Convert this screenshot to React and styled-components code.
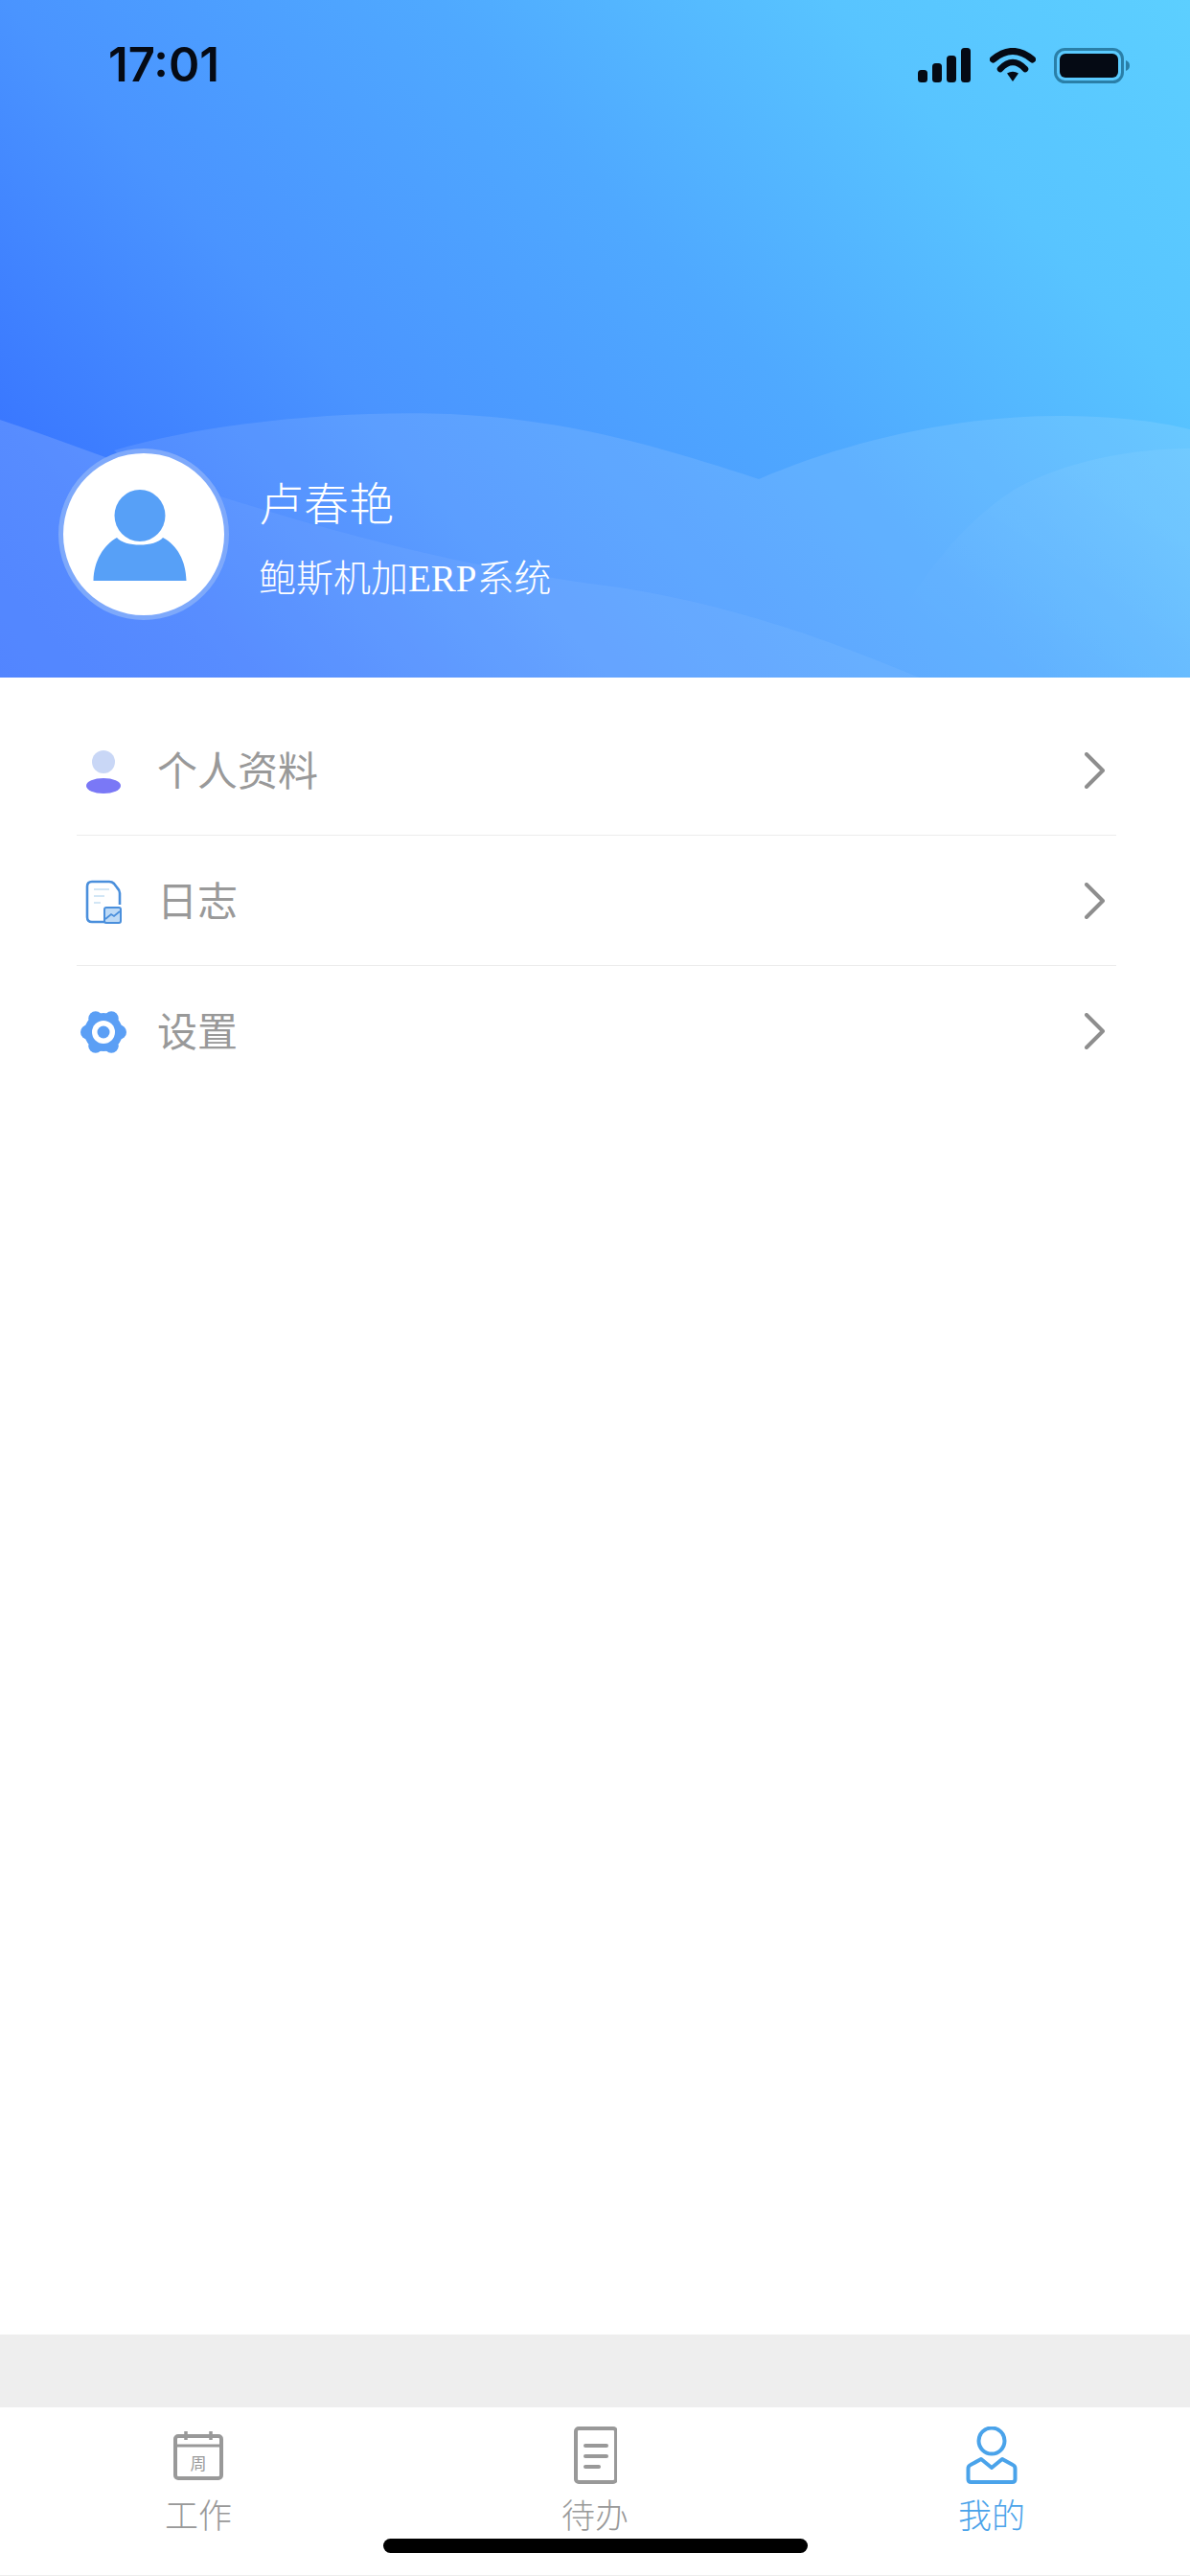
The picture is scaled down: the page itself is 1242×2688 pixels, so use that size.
import React from "react"
import styled, { createGlobalStyle } from "styled-components"

const GlobalStyle = createGlobalStyle`
  html, body {
    margin: 0;
    padding: 0;
    background: #fff;
  }
  * {
    box-sizing: border-box;
  }
`

const Page = styled.div`
  width: 1242px;
  height: 2688px;
  display: flex;
  flex-direction: column;
  position: relative;
  overflow: hidden;
  background: #fff;
  font-family: "Noto Sans CJK SC", "Noto Sans", sans-serif;
`

const Hero = styled.header`
  position: relative;
  height: 707px;
  flex: none;
  display: flex;
  flex-direction: column;
  justify-content: space-between;
  background: linear-gradient(48deg, #3470ff 0%, #3a78ff 13%, #4a94ff 34%, #4fa9ff 58%, #58c4ff 80%, #5ccfff 100%);
  overflow: hidden;
`

const HeroWaves = styled.svg`
  position: absolute;
  inset: 0;
  width: 100%;
  height: 100%;
`

const StatusBar = styled.div`
  position: relative;
  display: flex;
  justify-content: space-between;
  align-items: center;
  height: 36px;
  margin-top: 50px;
  padding: 0 62px 0 113px;
`

const Clock = styled.span`
  font-family: Inter, "Liberation Sans", sans-serif;
  font-size: 49px;
  font-weight: 600;
  line-height: 36px;
  color: #050a14;
`

const StatusIcons = styled.div`
  display: flex;
  align-items: center;
  gap: 19px;
`

const Profile = styled.div`
  position: relative;
  display: flex;
  align-items: center;
  gap: 31px;
  padding: 0 0 60px 61px;
`

const Avatar = styled.div`
  width: 178px;
  height: 179px;
  border-radius: 50%;
  background: #fff;
  border: 5px solid #7ea9fb;
  display: flex;
  align-items: center;
  justify-content: center;
`

const ProfileText = styled.div`
  display: flex;
  flex-direction: column;
  gap: 31px;
  color: #fff;
  margin-top: 7px;
`

const UserName = styled.div`
  font-size: 47px;
  font-weight: 300;
  line-height: 54px;
`

const SystemName = styled.div`
  font-family: "Liberation Serif", "Noto Sans CJK SC", serif;
  font-size: 39px;
  font-weight: 300;
  line-height: 46px;
`

const Menu = styled.nav`
  padding: 29px 77px 0 80px;
  flex: 1;
`

const MenuRow = styled.div`
  display: flex;
  align-items: center;
  height: 136px;
  padding-right: 11px;
  border-bottom: ${p => (p.$last ? "none" : "1px solid #ececec")};
`

const MenuIcon = styled.div`
  width: 56px;
  flex: none;
  display: flex;
  justify-content: center;
  margin-right: 28px;
  padding-top: ${p => p.$drop}px;
`

const MenuLabel = styled.span`
  flex: 1;
  font-size: 42px;
  line-height: 50px;
  margin-bottom: 4px;
  color: #999;
`

const GreyBand = styled.div`
  height: 76px;
  flex: none;
  background: #eee;
`

const TabBar = styled.footer`
  height: 176px;
  flex: none;
  display: grid;
  grid-template-columns: repeat(3, 1fr);
  background: #fff;
  border-bottom: 1px solid #eee;
`

const Tab = styled.div`
  display: flex;
  flex-direction: column;
  align-items: center;
  padding-top: 18px;
  color: ${p => (p.$active ? "#4aa3ea" : "#999")};
`

const TabIcon = styled.div`
  height: 64px;
  display: flex;
  align-items: center;
  justify-content: center;
`

const TabLabel = styled.span`
  margin-top: 8px;
  font-size: 35px;
  font-weight: 300;
  line-height: 42px;
`

const HomeIndicator = styled.div`
  position: absolute;
  left: 400px;
  bottom: 24px;
  width: 443px;
  height: 15px;
  border-radius: 8px;
  background: #000;
`

const SignalIcon = () => (
  <svg width="56" height="36" viewBox="0 0 56 36">
    <rect x="0" y="23" width="10" height="13" rx="3.5" fill="#050a14" />
    <rect x="15" y="16" width="10" height="20" rx="3.5" fill="#050a14" />
    <rect x="30" y="8" width="10" height="28" rx="3.5" fill="#050a14" />
    <rect x="45" y="0" width="10" height="36" rx="3.5" fill="#050a14" />
  </svg>
)

const WifiIcon = () => (
  <svg width="48" height="36" viewBox="0 0 48 36">
    <path d="M3.500 12 Q24 -5 44.500 12" fill="none" stroke="#050a14" strokeWidth="7" strokeLinecap="round" />
    <path d="M11 22 Q24 8 37 22" fill="none" stroke="#050a14" strokeWidth="6.500" strokeLinecap="round" />
    <path d="M18 26.500 Q24 23 30 26.500 L24 35 Z" fill="#050a14" />
  </svg>
)

const BatteryIcon = () => (
  <svg width="80" height="37" viewBox="0 0 80 37">
    <rect x="1.5" y="1.5" width="70" height="34" rx="10" fill="none" stroke="#2a7fa8" strokeWidth="3" />
    <rect x="6" y="6" width="61" height="25" rx="6" fill="#050a14" />
    <path d="M75 13 C78 14 79 16 79 18.5 C79 21 78 23 75 24 Z" fill="#2a7fa8" />
  </svg>
)

const AvatarIcon = () => (
  <svg width="106" height="98" viewBox="0 -2 106 98">
    <ellipse cx="49" cy="27" rx="26.5" ry="27" fill="#57a0f7" />
    <path d="M25 50 C33 60 65 60 73 50 C88 58 97 74 97.500 95 L0.500 95 C1 74 11 58 25 50 Z" fill="#57a0f7" />
  </svg>
)

const ProfileIcon = () => (
  <svg width="38" height="46" viewBox="0 0 38 46">
    <circle cx="19" cy="12" r="12" fill="#c9d7f6" />
    <ellipse cx="19" cy="37" rx="18" ry="8" fill="#7a78f6" />
  </svg>
)

const LogIcon = () => (
  <svg width="38" height="46" viewBox="0 0 38 46">
    <path d="M30 44 L7 44 Q2 44 2 39 L2 7 Q2 2 7 2 L25 2 Q28 2 30 4 L33 8 Q36 11 36 14 L36 26" fill="none" stroke="#4a8fdc" strokeWidth="2.6" />
    <path d="M9 10 H25 M9 17 H20 M9 24 H16" stroke="#d2e6f5" strokeWidth="2" />
    <rect x="20" y="29" width="17" height="16" rx="2" fill="#bedaf6" stroke="#4a8fdc" strokeWidth="2" />
    <path d="M21 41 L27 36 L30 38 L36 33" fill="none" stroke="#4a8fdc" strokeWidth="1.8" />
  </svg>
)

const GearIcon = () => {
  const lobes = [0, 60, 120, 180, 240, 300]
  return (
    <svg width="50" height="48" viewBox="-25 -24 50 48">
      <circle r="20" fill="#5b9ff5" />
      {lobes.map(a => (
        <circle
          key={a}
          cx={16.5 * Math.cos((a * Math.PI) / 180)}
          cy={16.5 * Math.sin((a * Math.PI) / 180)}
          r="7.500"
          fill="#5b9ff5"
        />
      ))}
      <circle r="12" fill="#fff" />
      <circle r="6.500" fill="#5b9ff5" />
    </svg>
  )
}

const Chevron = () => (
  <svg width="22" height="38" viewBox="0 0 22 38">
    <path d="M2 2 L19 19 L2 36" fill="none" stroke="#8e8e8e" strokeWidth="4" strokeLinecap="round" strokeLinejoin="round" />
  </svg>
)

const CalendarIcon = () => (
  <svg width="52" height="52" viewBox="0 0 52 52">
    <rect x="2" y="6" width="48" height="44" rx="3" fill="none" stroke="#999" strokeWidth="4" />
    <path d="M2 16 H50" stroke="#999" strokeWidth="3" />
    <path d="M13 1 V10 M39 1 V10" stroke="#999" strokeWidth="3.500" />
    <text x="26" y="41" textAnchor="middle" fontSize="17" fill="#999" fontFamily="'Noto Sans CJK SC', sans-serif">周</text>
  </svg>
)

const TodoIcon = () => (
  <svg width="46" height="60" viewBox="-1 0 46 60">
    <rect x="2" y="2" width="42" height="56" rx="3" fill="none" stroke="#999" strokeWidth="4" />
    <path d="M12 20 H34 M12 31 H34 M12 42 H26" stroke="#999" strokeWidth="4" strokeLinecap="round" />
  </svg>
)

const MineIcon = () => (
  <svg width="54" height="60" viewBox="0 0 54 60">
    <circle cx="27" cy="15" r="13.500" fill="none" stroke="#4aa3ea" strokeWidth="4" />
    <path d="M2.500 44 Q2.500 41 5 40 L16 34 L27 43 L38 34 L49 40 Q51.500 41 51.500 44 L51.500 55 Q51.500 58 48.500 58 L5.500 58 Q2.500 58 2.500 55 Z" fill="none" stroke="#4aa3ea" strokeWidth="4" strokeLinejoin="round" />
  </svg>
)

const menuItems = [
  { label: "个人资料", icon: <ProfileIcon />, drop: 4 },
  { label: "日志", icon: <LogIcon />, drop: 2 },
  { label: "设置", icon: <GearIcon />, drop: 2 },
]

const tabs = [
  { label: "工作", icon: <CalendarIcon /> },
  { label: "待办", icon: <TodoIcon /> },
  { label: "我的", icon: <MineIcon />, active: true },
]

const App = () => {
  return (
    <Page>
      <GlobalStyle />
      <Hero>
        <HeroWaves viewBox="0 0 1242 707" preserveAspectRatio="none">
          <defs>
            <linearGradient id="lobeFade" x1="0" y1="1" x2="1" y2="0">
              <stop offset="0.2" stopColor="#fff" stopOpacity="0" />
              <stop offset="0.8" stopColor="#fff" stopOpacity="0.06" />
            </linearGradient>
          </defs>
          <path d="M0 438 C60 458 110 478 170 498 C330 552 470 590 640 612 C760 630 860 665 960 707 L0 707 Z" fill="#fff" fillOpacity="0.15" />
          <path d="M119 470 C220 440 360 428 470 432 C600 438 700 470 792 500 C880 462 1000 432 1115 434 C1170 435 1210 440 1242 448 L1242 707 L960 707 C860 665 760 630 640 612 C470 590 330 552 170 498 C150 491 135 486 119 470 Z" fill="#fff" fillOpacity="0.1" />
          <path d="M900 707 C950 620 990 555 1060 510 C1110 482 1180 468 1242 468 L1242 707 Z" fill="url(#lobeFade)" />
        </HeroWaves>
        <StatusBar>
          <Clock>17:01</Clock>
          <StatusIcons>
            <SignalIcon />
            <WifiIcon />
            <BatteryIcon />
          </StatusIcons>
        </StatusBar>
        <Profile>
          <Avatar>
            <AvatarIcon />
          </Avatar>
          <ProfileText>
            <UserName>卢春艳</UserName>
            <SystemName>鲍斯机加ERP系统</SystemName>
          </ProfileText>
        </Profile>
      </Hero>
      <Menu>
        {menuItems.map((item, i) => (
          <MenuRow key={item.label} $last={i === menuItems.length - 1}>
            <MenuIcon $drop={item.drop}>{item.icon}</MenuIcon>
            <MenuLabel>{item.label}</MenuLabel>
            <Chevron />
          </MenuRow>
        ))}
      </Menu>
      <GreyBand />
      <TabBar>
        {tabs.map(tab => (
          <Tab key={tab.label} $active={tab.active}>
            <TabIcon>{tab.icon}</TabIcon>
            <TabLabel>{tab.label}</TabLabel>
          </Tab>
        ))}
      </TabBar>
      <HomeIndicator />
    </Page>
  )
}

export default App
